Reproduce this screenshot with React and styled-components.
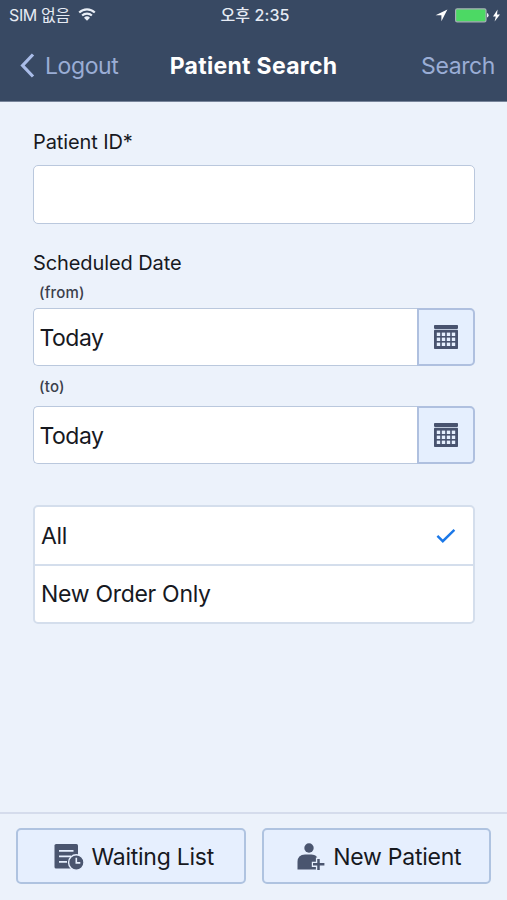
import React from "react";
import styled, { createGlobalStyle } from "styled-components";

const GlobalStyle = createGlobalStyle`
  * {
    box-sizing: border-box;
  }
  body {
    margin: 0;
    background-color: #ecf2fb;
    font-family: Inter, "Noto Sans CJK KR", sans-serif;
    color: #17191f;
  }
  button, input {
    font-family: inherit;
    color: inherit;
    margin: 0;
  }
`;

const Screen = styled.div`
  display: flex;
  flex-direction: column;
  width: 100%;
  height: 100vh;
  overflow: hidden;
`;

const Header = styled.header`
  height: 102px;
  background-color: #384963;
  border-bottom: 1px solid #77849a;
`;
const StatusBar = styled.div`
  display: grid;
  grid-template-columns: 1fr auto 1fr;
  align-items: center;
  height: 30px;
  padding: 0 6px 0 9px;
  font-size: 16px;
  line-height: 30px;
  color: #e6ebf4;
`;
const Carrier = styled.div`
  display: flex;
  align-items: center;
  gap: 8px;
  letter-spacing: -0.35px;
`;
const Clock = styled.div`
  font-weight: 500;
  letter-spacing: 0.1px;
`;
const StatusIcons = styled.div`
  display: flex;
  align-items: center;
  justify-content: flex-end;
`;

const NavBar = styled.nav`
  display: grid;
  grid-template-columns: 1fr auto 1fr;
  align-items: center;
  height: 71px;
  padding: 0 12px;
`;
const NavButton = styled.button`
  display: flex;
  align-items: center;
  justify-self: ${({ $end }) => ($end ? "end" : "start")};
  gap: 9px;
  padding: ${({ $end }) => ($end ? "0" : "0 0 0 8px")};
  border: 0;
  background: none;
  font-size: 23px;
  letter-spacing: -0.4px;
  color: #9aadd5;
`;
const Title = styled.h1`
  margin: 0;
  font-size: 23px;
  font-weight: 700;
  letter-spacing: 0.3px;
  color: #fff;
`;

const Form = styled.main`
  flex: 1;
  padding: 26px 32px 0 33px;
`;
const Label = styled.label`
  display: block;
  height: 28px;
  margin-bottom: 9px;
  font-size: 20px;
  line-height: 28px;
  letter-spacing: -0.1px;
`;
const SectionLabel = styled(Label)`
  margin: 25px 0 7px;
`;
const SubLabel = styled.div`
  height: 18px;
  margin: ${({ $spaced }) => ($spaced ? "12px 0 10px" : "0 0 6px")};
  padding-left: 6px;
  font-size: 15px;
  font-weight: 500;
  line-height: 18px;
  letter-spacing: 0.2px;
  color: #3b404b;
`;
const Field = styled.div`
  display: flex;
  height: ${({ $tall }) => ($tall ? "59px" : "58px")};
`;
const Input = styled.input`
  flex: 1;
  min-width: 0;
  height: 100%;
  padding: 2px 6px 0 5.5px;
  border: 1px solid #bac8dd;
  border-right-width: ${({ $joined }) => ($joined ? 0 : "1px")};
  border-radius: ${({ $joined }) => ($joined ? "5px 0 0 5px" : "5px")};
  background-color: #fff;
  font-size: 23px;
  letter-spacing: -0.5px;
  outline: none;
`;
const CalendarButton = styled.button`
  display: flex;
  align-items: center;
  justify-content: center;
  width: 58px;
  padding: 0;
  border: 2px solid #afc0df;
  border-radius: 0 5px 5px 0;
  background-color: #e5effe;
`;

const OptionList = styled.div`
  height: 119px;
  margin-top: 41px;
  border: 2px solid #d4deec;
  border-radius: 5px;
  background-color: #fff;
`;
const Option = styled.div`
  display: flex;
  align-items: center;
  justify-content: space-between;
  height: 57px;
  padding: 1px 17px 0 6px;
  font-size: 23px;
  letter-spacing: -0.3px;

  & + & {
    height: 58px;
    padding-top: 0;
    border-top: 2px solid #d4deec;
  }
`;

const Footer = styled.footer`
  display: grid;
  grid-template-columns: 1fr 1fr;
  gap: 16px;
  height: 88px;
  padding: 14px 16px 16px;
  border-top: 2px solid #d5dcec;
`;
const ActionButton = styled.button`
  display: flex;
  align-items: center;
  justify-content: center;
  gap: 8px;
  height: 56px;
  padding: 1px 0 0 6px;
  border: 2px solid #afc3e0;
  border-radius: 5px;
  background-color: #e6effe;
  font-size: 23px;
  letter-spacing: -0.25px;
`;

const WifiIcon = () => (
  <svg width="18" height="14" viewBox="0 0 18 14" fill="none" stroke="#e9eef6" strokeWidth="2.1">
    <path d="M1.2 4.6a11 11 0 0 1 15.6 0M4.1 7.6a7 7 0 0 1 9.8 0" />
    <path d="M9 12.8 6 9.8a4.3 4.3 0 0 1 6 0z" fill="#e9eef6" stroke="none" />
  </svg>
);

const LocationIcon = () => (
  <svg width="13" height="13" viewBox="0 0 13 13" fill="#fff">
    <path d="M12.4.5.6 6.2h5.8v6z" />
  </svg>
);

const BatteryIcon = () => (
  <svg width="44" height="15" viewBox="0 0 44 15">
    <rect x="7.6" y=".8" width="30.4" height="13" rx="1.6" fill="#4cd964" stroke="#a5afb5" strokeWidth="1.2" />
    <path d="M39 5v4.6q1.6-.6 1.6-2.3T39 5z" fill="#e9eef6" />
  </svg>
);

const BoltIcon = () => (
  <svg width="9" height="13" viewBox="0 0 9 13" fill="#fff">
    <path d="M5.6.6 1 7.4h2.8L2.6 12.4 8 5.4H5z" />
  </svg>
);

const BackIcon = () => (
  <svg width="16" height="26" viewBox="0 0 16 26" fill="none" stroke="#a9bce8" strokeWidth="3.2">
    <path d="M13 1.5 2.6 12.5l10.4 11" />
  </svg>
);

const COLUMNS = [2.8, 7.8, 12.8, 17.8];
const ROWS = [7.6, 12.6, 17.6];

const CalendarIcon = () => (
  <svg width="24" height="24" viewBox="0 0 24 24">
    <rect width="24" height="3.9" rx=".8" fill="#48536f" />
    <rect y="4.8" width="24" height="19.2" rx=".8" fill="#48536f" />
    {ROWS.map((y) =>
      COLUMNS.map((x) => (
        <rect key={`${x}-${y}`} x={x} y={y} width="3.4" height="3.4" fill="#e5effe" />
      ))
    )}
  </svg>
);

const CheckIcon = () => (
  <svg width="20" height="16" viewBox="0 0 20 16" fill="none" stroke="#1b78e8" strokeWidth="2.4">
    <path d="M1.4 7.8 6.8 13.2 18.4 1.8" />
  </svg>
);

const WaitingListIcon = () => (
  <svg width="30" height="28" viewBox="0 0 30 28">
    <rect x=".5" y="1" width="23.5" height="24.5" rx="1.6" fill="#4a556f" />
    <path d="M5 7.8h14.5M5 13.3h12M5 18.8h8" stroke="#e6effe" strokeWidth="1.7" />
    <circle cx="22.3" cy="19.5" r="7.7" fill="#4a556f" stroke="#e6effe" strokeWidth="1.4" />
    <path d="M22.3 14.7v5.2h4" fill="none" stroke="#e6effe" strokeWidth="1.6" />
  </svg>
);

const NewPatientIcon = () => (
  <svg width="28" height="28" viewBox="0 0 28 28">
    <circle cx="12" cy="5" r="4.7" fill="#4a556f" />
    <path d="M.5 26.5V19q0-7.5 7.5-7.5h6.5q6 0 6.5 6v9z" fill="#4a556f" />
    <path d="M21.5 14.6v13M14.8 21.3H28" stroke="#e6effe" strokeWidth="5.2" />
    <path d="M21.5 16v11M16 21.3h11.4" stroke="#4a556f" strokeWidth="2.5" />
  </svg>
);

const DateField = ({ value }) => (
  <Field>
    <Input $joined defaultValue={value} />
    <CalendarButton>
      <CalendarIcon />
    </CalendarButton>
  </Field>
);

const OPTIONS = ["All", "New Order Only"];

const App = () => {
  const [selected, setSelected] = React.useState("All");

  return (
    <>
      <GlobalStyle />
      <Screen>
        <Header>
          <StatusBar>
            <Carrier>
              SIM 없음
              <WifiIcon />
            </Carrier>
            <Clock>오후 2:35</Clock>
            <StatusIcons>
              <LocationIcon />
              <BatteryIcon />
              <BoltIcon />
            </StatusIcons>
          </StatusBar>
          <NavBar>
            <NavButton>
              <BackIcon />
              Logout
            </NavButton>
            <Title>Patient Search</Title>
            <NavButton $end>Search</NavButton>
          </NavBar>
        </Header>
        <Form>
          <Label htmlFor="patient-id">Patient ID*</Label>
          <Field $tall>
            <Input id="patient-id" />
          </Field>
          <SectionLabel as="div">Scheduled Date</SectionLabel>
          <SubLabel>(from)</SubLabel>
          <DateField value="Today" />
          <SubLabel $spaced>(to)</SubLabel>
          <DateField value="Today" />
          <OptionList>
            {OPTIONS.map((option) => (
              <Option key={option} onClick={() => setSelected(option)}>
                {option}
                {selected === option && <CheckIcon />}
              </Option>
            ))}
          </OptionList>
        </Form>
        <Footer>
          <ActionButton>
            <WaitingListIcon />
            Waiting List
          </ActionButton>
          <ActionButton>
            <NewPatientIcon />
            New Patient
          </ActionButton>
        </Footer>
      </Screen>
    </>
  );
};

export default App;
